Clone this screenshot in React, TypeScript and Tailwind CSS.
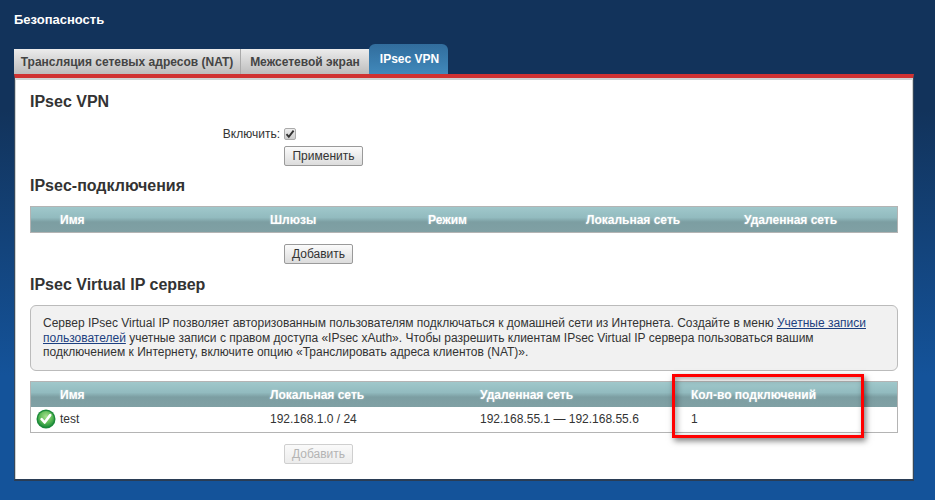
function Btn({ label, disabled, wide }: { label: string; disabled?: boolean; wide?: boolean }) {
  return (
    <button
      className={
        (wide ? "w-[79px] " : "") +
        (disabled
          ? "h-5 px-[7px] text-xs leading-none rounded-[2px] border border-[#cfcfcf] bg-gradient-to-b from-[#fafafa] to-[#ececec] text-[#b4b4b4]"
          : "h-5 px-[7px] text-xs leading-none rounded-[2px] border border-[#9a9a9a] bg-gradient-to-b from-[#fbfbfb] to-[#dcdcdc] text-[#333]")
      }
    >
      {label}
    </button>
  );
}

function Head({ children, cols }: { children: React.ReactNode; cols: string }) {
  return (
    <div className={`grid ${cols} pl-[29px] h-full items-center text-xs font-bold text-white bg-[linear-gradient(#a0c8cb,#92bbbf_42%,#7c9ea2_60%,#80a0a4)] [text-shadow:0_0_2px_rgba(255,255,255,0.45)]`}>
      {children}
    </div>
  );
}

function Heading({ children }: { children: React.ReactNode }) {
  return <h2 className="text-base leading-5 font-bold text-[#333]">{children}</h2>;
}

function CheckIcon() {
  return (
    <svg width="20" height="20" viewBox="0 0 20 20" className="shrink-0">
      <defs>
        <radialGradient id="g" cx="50%" cy="35%" r="65%">
          <stop offset="0%" stopColor="#a6e08f" />
          <stop offset="60%" stopColor="#5cba55" />
          <stop offset="100%" stopColor="#1f8f3c" />
        </radialGradient>
      </defs>
      <circle cx="10" cy="10" r="9.5" fill="#1c8a3a" />
      <circle cx="10" cy="10" r="8" fill="url(#g)" />
      <path d="M5.6 10.2l3 3.3 5.6-7.4" fill="none" stroke="#fff" strokeWidth="2.6" strokeLinecap="round" strokeLinejoin="round" />
    </svg>
  );
}

export default function App() {
  return (
    <div className="relative w-[935px] h-[500px] overflow-hidden pt-3 font-['Liberation_Sans',Arial,sans-serif] bg-[linear-gradient(#12335b,#12335b_22%,#14539a_75%,#14539a)]">
      <div className="pl-[14px] h-[32px] text-[13px] leading-[15px] font-bold text-white">Безопасность</div>
      <div className="flex items-end pl-[14px] h-[30px]">
        <div className="w-[227px] h-[25px] flex items-center justify-center text-xs font-bold text-[#444] border-r border-[#aaa] bg-gradient-to-b from-[#ececec] to-[#bdbdbd]">
          Трансляция сетевых адресов (NAT)
        </div>
        <div className="w-[128px] h-[25px] flex items-center justify-center text-xs font-bold text-[#444] bg-gradient-to-b from-[#ececec] to-[#bdbdbd]">
          Межсетевой экран
        </div>
        <div className="w-[79px] h-[30px] pb-px pl-0.5 flex items-center justify-center text-xs font-bold text-white rounded-t-[6px] bg-gradient-to-b from-[#316d9d] to-[#4189bb]">
          IPsec VPN
        </div>
      </div>
      <div className="ml-[14px] w-[900px] h-[407px] border-t-4 border-t-[#d03232] border-x border-b-2 border-x-[#36485c] border-b-[#2a3d55] bg-white shadow-[inset_0_1px_0_1px_#cfd3d3]">
        <div className="px-[15px] pt-[14px]">
          <Heading>IPsec VPN</Heading>
          <div className="mt-[11px] h-[22px] flex items-center text-xs text-[#333]">
            <span className="w-[250px] text-right">Включить:</span>
            <span className="ml-1 w-3 h-3 flex items-center justify-center rounded-[2px] border border-[#aaa] bg-gradient-to-b from-[#eee] to-[#ccc]">
              <svg width="10" height="10" viewBox="0 0 10 10">
                <path d="M1.5 5.2l2.3 2.6L8.6 1.6" fill="none" stroke="#333" strokeWidth="1.9" />
              </svg>
            </span>
          </div>
          <div className="mt-px pl-[254px] flex"><Btn label="Применить" wide /></div>
          <div className="mt-[10px]"><Heading>IPsec-подключения</Heading></div>
          <div className="mt-[10px] h-[27px] border border-[#b4b4b4]">
            <Head cols="grid-cols-[210px_158px_158px_158px_1fr]">
              <span>Имя</span><span>Шлюзы</span><span>Режим</span><span>Локальная сеть</span><span>Удаленная сеть</span>
            </Head>
          </div>
          <div className="mt-[11px] pl-[254px] flex"><Btn label="Добавить" /></div>
          <div className="mt-[11px]"><Heading>IPsec Virtual IP сервер</Heading></div>
          <div className="mt-[10px] h-[66px] rounded-[6px] border border-[#bbb] bg-[#f1f1f1] pl-3 pt-[10px] text-xs leading-[14.5px] text-[#333]">
            Сервер IPsec Virtual IP позволяет авторизованным пользователям подключаться к домашней сети из Интернета. Создайте в меню{" "}
            <a className="text-[#1c3f80] underline">Учетные записи</a>
            <br />
            <a className="text-[#1c3f80] underline">пользователей</a> учетные записи с правом доступа «IPsec xAuth». Чтобы разрешить клиентам IPsec Virtual IP сервера пользоваться вашим
            <br />
            подключением к Интернету, включите опцию «Транслировать адреса клиентов (NAT)».
          </div>
          <div className="mt-[10px] border border-[#b4b4b4]">
            <div className="h-[25px]">
              <Head cols="grid-cols-[210px_210px_211px_1fr]">
                <span>Имя</span><span>Локальная сеть</span><span>Удаленная сеть</span><span>Кол-во подключений</span>
              </Head>
            </div>
            <div className="grid grid-cols-[239px_210px_211px_1fr] h-[25px] pb-0.5 items-center text-xs text-[#333]">
              <span className="flex items-center gap-1 pl-[5px]"><CheckIcon />test</span>
              <span>192.168.1.0 / 24</span>
              <span>192.168.55.1 — 192.168.55.6</span>
              <span>1</span>
            </div>
          </div>
          <div className="mt-[11px] pl-[254px] flex"><Btn label="Добавить" disabled /></div>
        </div>
      </div>
      <div className="absolute left-[672px] top-[374px] w-[192px] h-[64px] border-[3px] border-[#f00] shadow-[2px_3px_6px_rgba(0,0,0,0.5),inset_2px_2px_6px_rgba(0,0,0,0.35)]" />
    </div>
  );
}
